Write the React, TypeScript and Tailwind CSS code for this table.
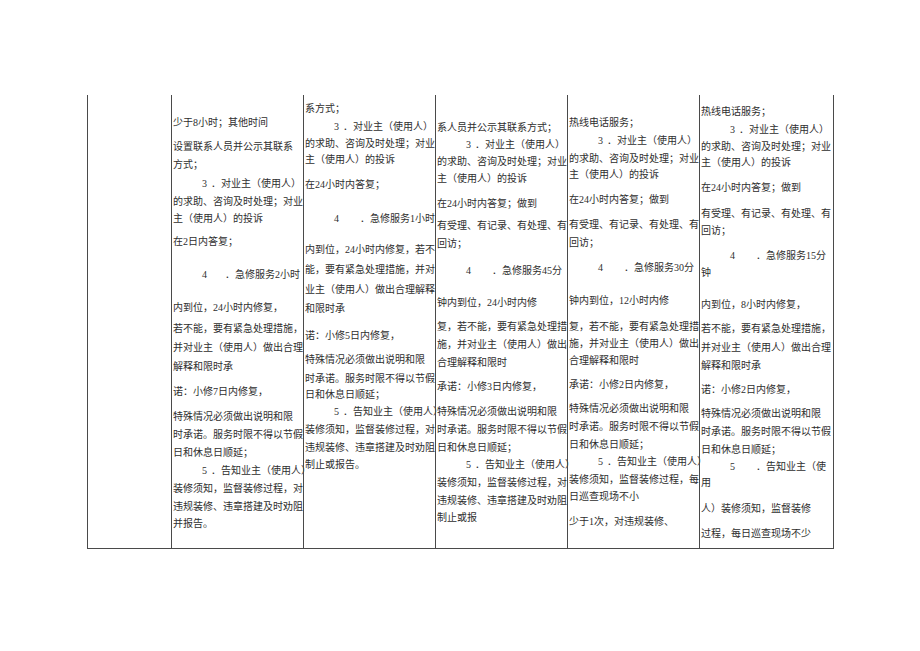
type Line = { t: string; m: string; n?: string; g?: string };

const G2 = 'ml-[18px]';
const G = 'ml-[21px]';

const col2: Line[] = [
  { t: '少于8小时；其他时间', m: 'mt-[18px]' },
  { t: '设置联系人员并公示其联系', m: 'mt-[8px]' },
  { t: '方式；', m: 'mt-[2px]' },
  { n: '3', g: 'ml-[4px]', t: '．对业主（使用人）', m: 'mt-[3px]' },
  { t: '的求助、咨询及时处理；对业', m: 'mt-[2px]' },
  { t: '主（使用人）的投诉', m: 'mt-[1px]' },
  { t: '在2日内答复；', m: 'mt-[7px]' },
  { n: '4', g: G2, t: '．急修服务2小时', m: 'mt-[17px]' },
  { t: '内到位，24小时内修复，', m: 'mt-[17px]' },
  { t: '若不能，要有紧急处理措施，', m: 'mt-[5px]' },
  { t: '并对业主（使用人）做出合理', m: 'mt-[3px]' },
  { t: '解释和限时承', m: 'mt-[3px]' },
  { t: '诺：小修7日内修复，', m: 'mt-[9px]' },
  { t: '特殊情况必须做出说明和限', m: 'mt-[9px]' },
  { t: '时承诺。服务时限不得以节假', m: 'mt-[2px]' },
  { t: '日和休息日顺延；', m: 'mt-[2px]' },
  { n: '5', g: 'ml-[4px]', t: '．告知业主（使用人）', m: 'mt-[2px]' },
  { t: '装修须知，监督装修过程，对', m: 'mt-[2px]' },
  { t: '违规装修、违章搭建及时劝阻', m: 'mt-[2px]' },
  { t: '并报告。', m: 'mt-[1px]' },
];

const col3: Line[] = [
  { t: '系方式；', m: 'mt-[4px]' },
  { n: '3', g: 'ml-[4px]', t: '．对业主（使用人）', m: 'mt-[2px]' },
  { t: '的求助、咨询及时处理；对业', m: 'mt-[1px]' },
  { t: '主（使用人）的投诉', m: 'mt-0' },
  { t: '在24小时内答复；', m: 'mt-[9px]' },
  { n: '4', g: G, t: '．急修服务1小时', m: 'mt-[18px]' },
  { t: '内到位，24小时内修复，若不', m: 'mt-[15px]' },
  { t: '能，要有紧急处理措施，并对', m: 'mt-[4px]' },
  { t: '业主（使用人）做出合理解释', m: 'mt-[4px]' },
  { t: '和限时承', m: 'mt-[3px]' },
  { t: '诺：小修5日内修复，', m: 'mt-[11px]' },
  { t: '特殊情况必须做出说明和限', m: 'mt-[8px]' },
  { t: '时承诺。服务时限不得以节假', m: 'mt-[3px]' },
  { t: '日和休息日顺延；', m: 'mt-0' },
  { n: '5', g: 'ml-[4px]', t: '．告知业主（使用人）', m: 'mt-[1px]' },
  { t: '装修须知，监督装修过程，对', m: 'mt-[2px]' },
  { t: '违规装修、违章搭建及时劝阻', m: 'mt-[2px]' },
  { t: '制止或报告。', m: 'mt-[1px]' },
];

const col4: Line[] = [
  { t: '系人员并公示其联系方式；', m: 'mt-[23px]' },
  { n: '3', g: 'ml-[4px]', t: '．对业主（使用人）', m: 'mt-[1px]' },
  { t: '的求助、咨询及时处理；对业', m: 'mt-[1px]' },
  { t: '主（使用人）的投诉', m: 'mt-[1px]' },
  { t: '在24小时内答复；做到', m: 'mt-[9px]' },
  { t: '有受理、有记录、有处理、有', m: 'mt-[6px]' },
  { t: '回访；', m: 'mt-[2px]' },
  { n: '4', g: G, t: '．急修服务45分', m: 'mt-[11px]' },
  { t: '钟内到位，24小时内修', m: 'mt-[16px]' },
  { t: '复，若不能，要有紧急处理措', m: 'mt-[8px]' },
  { t: '施，并对业主（使用人）做出', m: 'mt-[2px]' },
  { t: '合理解释和限时', m: 'mt-[2px]' },
  { t: '承诺：小修3日内修复，', m: 'mt-[8px]' },
  { t: '特殊情况必须做出说明和限', m: 'mt-[9px]' },
  { t: '时承诺。服务时限不得以节假', m: 'mt-[2px]' },
  { t: '日和休息日顺延；', m: 'mt-[2px]' },
  { n: '5', g: 'ml-[4px]', t: '．告知业主（使用人）', m: 'mt-[1px]' },
  { t: '装修须知，监督装修过程，对', m: 'mt-[2px]' },
  { t: '违规装修、违章搭建及时劝阻', m: 'mt-[2px]' },
  { t: '制止或报', m: 'mt-[1px]' },
];

const col5: Line[] = [
  { t: '热线电话服务；', m: 'mt-[18px]' },
  { n: '3', g: 'ml-[4px]', t: '．对业主（使用人）', m: 'mt-[2px]' },
  { t: '的求助、咨询及时处理；对业', m: 'mt-[2px]' },
  { t: '主（使用人）的投诉', m: 'mt-0' },
  { t: '在24小时内答复；做到', m: 'mt-[9px]' },
  { t: '有受理、有记录、有处理、有', m: 'mt-[9px]' },
  { t: '回访；', m: 'mt-[2px]' },
  { n: '4', g: G, t: '．急修服务30分', m: 'mt-[9px]' },
  { t: '钟内到位，12小时内修', m: 'mt-[17px]' },
  { t: '复，若不能，要有紧急处理措', m: 'mt-[10px]' },
  { t: '施，并对业主（使用人）做出', m: 'mt-[1px]' },
  { t: '合理解释和限时', m: 'mt-[1px]' },
  { t: '承诺：小修2日内修复，', m: 'mt-[8px]' },
  { t: '特殊情况必须做出说明和限', m: 'mt-[8px]' },
  { t: '时承诺。服务时限不得以节假', m: 'mt-[2px]' },
  { t: '日和休息日顺延；', m: 'mt-[2px]' },
  { n: '5', g: 'ml-[4px]', t: '．告知业主（使用人）', m: 'mt-[1px]' },
  { t: '装修须知，监督装修过程，每', m: 'mt-[2px]' },
  { t: '日巡查现场不小', m: 'mt-[1px]' },
  { t: '少于1次，对违规装修、', m: 'mt-[9px]' },
];

const col6: Line[] = [
  { t: '热线电话服务；', m: 'mt-[7px]' },
  { n: '3', g: 'ml-[4px]', t: '．对业主（使用人）', m: 'mt-[2px]' },
  { t: '的求助、咨询及时处理；对业', m: 'mt-[1px]' },
  { t: '主（使用人）的投诉', m: 'mt-0' },
  { t: '在24小时内答复；做到', m: 'mt-[9px]' },
  { t: '有受理、有记录、有处理、有', m: 'mt-[10px]' },
  { t: '回访；', m: 'mt-[1px]' },
  { n: '4', g: G, t: '．急修服务15分', m: 'mt-[9px]' },
  { t: '钟', m: 'mt-[1px]' },
  { t: '内到位，8小时内修复，', m: 'mt-[16px]' },
  { t: '若不能，要有紧急处理措施，', m: 'mt-[8px]' },
  { t: '并对业主（使用人）做出合理', m: 'mt-[3px]' },
  { t: '解释和限时承', m: 'mt-[2px]' },
  { t: '诺：小修2日内修复，', m: 'mt-[8px]' },
  { t: '特殊情况必须做出说明和限', m: 'mt-[8px]' },
  { t: '时承诺。服务时限不得以节假', m: 'mt-[2px]' },
  { t: '日和休息日顺延；', m: 'mt-[2px]' },
  { n: '5', g: G, t: '．告知业主（使', m: 'mt-[1px]' },
  { t: '用', m: 'mt-0' },
  { t: '人）装修须知，监督装修', m: 'mt-[10px]' },
  { t: '过程，每日巡查现场不少', m: 'mt-[9px]' },
];

const columns: { w: string; lines: Line[]; last?: boolean }[] = [
  { w: 'w-[84px]', lines: [] },
  { w: 'w-[132px]', lines: col2 },
  { w: 'w-[132px]', lines: col3 },
  { w: 'w-[132px]', lines: col4 },
  { w: 'w-[132px]', lines: col5 },
  { w: 'w-[135px]', lines: col6, last: true },
];

function Cell({ lines }: { lines: Line[] }) {
  return (
    <div className="flex flex-col pl-[1px] pt-[2px]">
      {lines.map((l, i) => (
        <div
          key={i}
          className={`whitespace-nowrap leading-[16px] ${l.m} ${l.n ? 'pl-[29px]' : ''}`}
        >
          {l.n && <span>{l.n}</span>}
          <span className={l.g ?? ''}>{l.t}</span>
        </div>
      ))}
    </div>
  );
}

export default function App() {
  return (
    <div
      className="min-h-[651px] bg-white pt-[95px] pl-[87px] text-[10px] text-[#2e2e2e]"
      style={{ fontFamily: '"Liberation Serif", "Noto Sans CJK SC", serif' }}
    >
      <div className="flex h-[454px] w-[747px] border-b border-[#4a4a4a]">
        {columns.map((c, i) => (
          <div
            key={i}
            className={`${c.w} shrink-0 border-l border-[#4a4a4a] ${c.last ? 'border-r' : ''}`}
          >
            <Cell lines={c.lines} />
          </div>
        ))}
      </div>
    </div>
  );
}
